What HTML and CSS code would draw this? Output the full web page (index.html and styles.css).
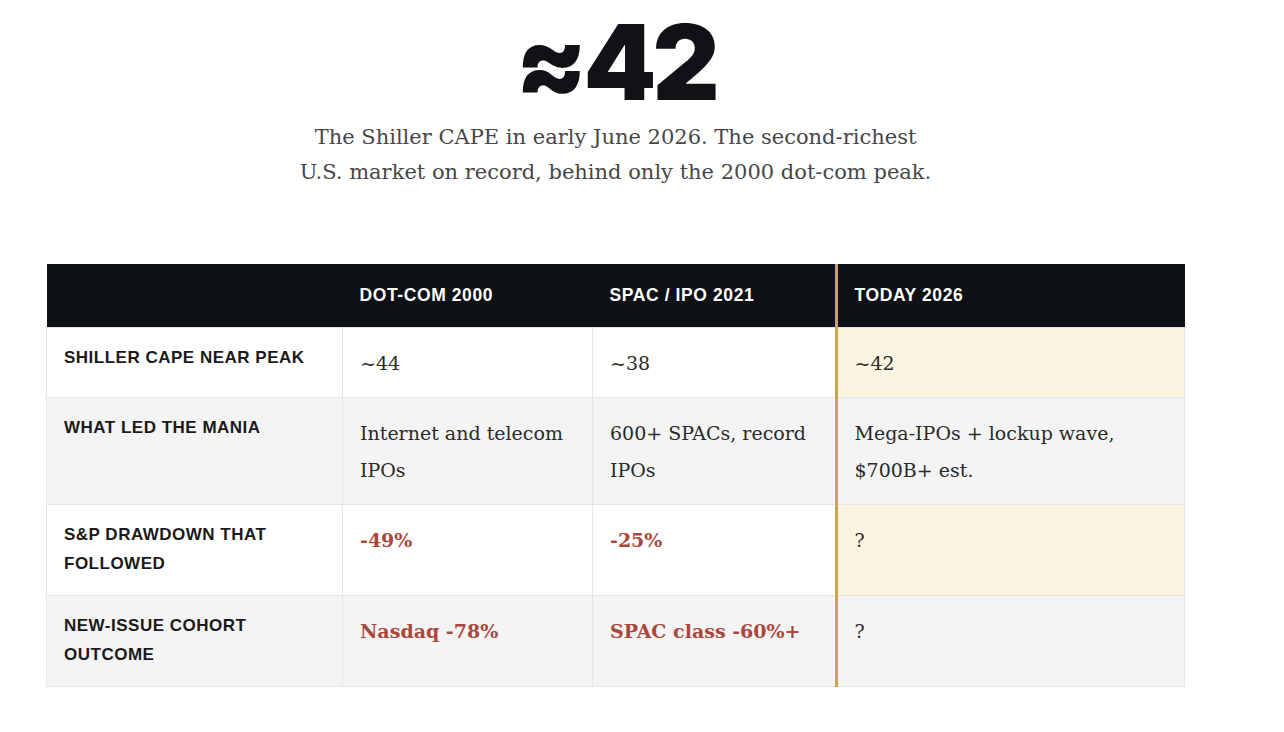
FILE: index.html
```html
<!DOCTYPE html>
<html lang="en">
<head>
<meta charset="utf-8">
<title>Shiller CAPE comparison</title>
<link rel="stylesheet" href="styles.css">
</head>
<body>
<main class="page">
  <section class="hero">
    <div class="big-number">≈42</div>
    <p class="caption">The Shiller CAPE in early June 2026. The second-richest<br>U.S. market on record, behind only the 2000 dot-com peak.</p>
  </section>

  <table class="compare">
    <thead>
      <tr>
        <th class="label-col"></th>
        <th>DOT-COM 2000</th>
        <th>SPAC / IPO 2021</th>
        <th class="today">TODAY 2026</th>
      </tr>
    </thead>
    <tbody>
      <tr>
        <td class="label">SHILLER CAPE NEAR PEAK</td>
        <td>~44</td>
        <td>~38</td>
        <td class="today">~42</td>
      </tr>
      <tr class="alt">
        <td class="label">WHAT LED THE MANIA</td>
        <td>Internet and telecom IPOs</td>
        <td>600+ SPACs, record IPOs</td>
        <td class="today">Mega-IPOs + lockup wave, $700B+ est.</td>
      </tr>
      <tr>
        <td class="label">S&amp;P DRAWDOWN THAT FOLLOWED</td>
        <td class="loss">-49%</td>
        <td class="loss">-25%</td>
        <td class="today">?</td>
      </tr>
      <tr class="alt">
        <td class="label">NEW-ISSUE COHORT OUTCOME</td>
        <td class="loss">Nasdaq -78%</td>
        <td class="loss">SPAC class -60%+</td>
        <td class="today">?</td>
      </tr>
    </tbody>
  </table>
</main>
</body>
</html>
```

FILE: styles.css
```css
html, body {
  margin: 0;
  padding: 0;
  background: #ffffff;
}

.page {
  width: 1139px;
  margin-left: 46px;
  padding-top: 10px;
}

.hero {
  display: flex;
  flex-direction: column;
  align-items: center;
}

.big-number {
  font-family: Inter, "Liberation Sans", sans-serif;
  font-weight: 900;
  font-size: 104px;
  line-height: 104px;
  letter-spacing: -4px;
  color: #101216;
}

.caption {
  margin: 6px 0 0;
  font-family: "DejaVu Serif", "Liberation Serif", serif;
  font-size: 21px;
  line-height: 35px;
  color: #474747;
  text-align: center;
}

.compare {
  margin-top: 74px;
  width: 1139px;
  border-collapse: collapse;
  table-layout: fixed;
}

.compare th {
  background: #0e1115;
  color: #ffffff;
  font-family: "Liberation Sans", Arial, sans-serif;
  font-weight: 700;
  font-size: 17.5px;
  letter-spacing: 0.6px;
  text-align: left;
  height: 63px;
  padding: 0 17px;
  vertical-align: middle;
}

.compare th.label-col { width: 262px; }
.compare th:nth-child(2) { width: 216px; }
.compare th:nth-child(3) { width: 208px; }

.compare td {
  border: 1px solid #e6e6e6;
  padding: 17px 17px 15px;
  vertical-align: top;
  font-family: "DejaVu Serif", "Liberation Serif", serif;
  font-size: 19px;
  line-height: 37px;
  color: #2a2a2a;
  background: #ffffff;
}

.compare tr.alt td {
  background: #f4f4f4;
}

.compare td.label {
  padding: 15px 17px 17px;
  font-family: "Liberation Sans", Arial, sans-serif;
  font-weight: 700;
  font-size: 17px;
  line-height: 29px;
  letter-spacing: 0.5px;
  color: #1a1a1a;
}

.compare td.loss {
  color: #a9473a;
  font-weight: 700;
}

.compare .today {
  border-left: 3px solid #c9a74e;
}

.compare td.today {
  background: #faf4e1;
}

.compare tr.alt td.today {
  background: #f4f4f4;
}
```
